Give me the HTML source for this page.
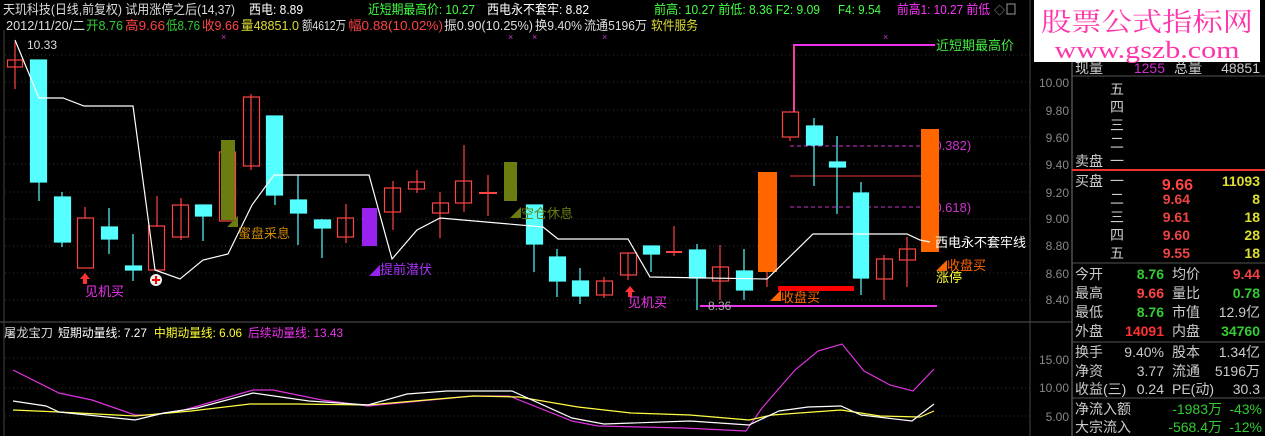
<!DOCTYPE html>
<html><head><meta charset="utf-8"><style>
html,body{margin:0;padding:0;background:#000;width:1265px;height:436px;overflow:hidden}
svg{display:block}
text{font-family:"Liberation Sans","WenQuanYi Zen Hei","Noto Sans CJK SC",sans-serif}
</style></head><body>
<svg width="1265" height="436" viewBox="0 0 1265 436" xmlns="http://www.w3.org/2000/svg">
<rect width="1265" height="436" fill="#000"/>
<!-- grid -->
<g stroke="#333" stroke-dasharray="1,3" stroke-width="1">
<line x1="5" y1="55" x2="1030" y2="55"/><line x1="5" y1="82" x2="1030" y2="82"/><line x1="5" y1="110" x2="1030" y2="110"/>
<line x1="5" y1="137" x2="1030" y2="137"/><line x1="5" y1="164" x2="1030" y2="164"/><line x1="5" y1="192" x2="1030" y2="192"/>
<line x1="5" y1="219" x2="1030" y2="219"/><line x1="5" y1="246" x2="1030" y2="246"/><line x1="5" y1="273" x2="1030" y2="273"/>
<line x1="5" y1="300" x2="1030" y2="300"/>
<line x1="5" y1="358" x2="1030" y2="358"/><line x1="5" y1="388" x2="1030" y2="388"/><line x1="5" y1="416" x2="1030" y2="416"/>
</g>
<line x1="0" y1="322" x2="1072" y2="322" stroke="#555"/>
<line x1="1030" y1="0" x2="1030" y2="436" stroke="#444"/>
<line x1="1072" y1="62" x2="1072" y2="436" stroke="#777"/>
<line x1="4" y1="30" x2="4" y2="436" stroke="#444"/>

<!-- header -->
<g font-size="13">
<text x="3" y="14" fill="#ddd" textLength="232" lengthAdjust="spacingAndGlyphs">天玑科技(日线,前复权) 试用涨停之后(14,37)</text>
<text x="249" y="14" fill="#fff" textLength="54" lengthAdjust="spacingAndGlyphs">西电: 8.89</text>
<text x="368" y="14" fill="#4f4" textLength="107" lengthAdjust="spacingAndGlyphs">近短期最高价: 10.27</text>
<text x="487" y="14" fill="#fff" textLength="102" lengthAdjust="spacingAndGlyphs">西电永不套牢: 8.82</text>
<text x="654" y="14" fill="#4f4" textLength="166" lengthAdjust="spacingAndGlyphs">前高: 10.27  前低: 8.36  F2: 9.09</text>
<text x="838" y="14" fill="#4f4" textLength="43" lengthAdjust="spacingAndGlyphs">F4: 9.54</text>
<text x="897" y="14" fill="#f3f" textLength="93" lengthAdjust="spacingAndGlyphs">前高1: 10.27  前低</text>
<text x="994" y="14" fill="#999" font-size="11">◇</text>
<rect x="1007" y="4" width="8" height="10" fill="none" stroke="#999"/>
<text x="6" y="30" fill="#ddd" textLength="79" lengthAdjust="spacingAndGlyphs">2012/11/20/二</text>
<text x="86" y="30" fill="#3c3" textLength="37" lengthAdjust="spacingAndGlyphs">开8.76</text>
<text x="125" y="30" fill="#f44" textLength="40" lengthAdjust="spacingAndGlyphs">高9.66</text>
<text x="166" y="30" fill="#3c3" textLength="34" lengthAdjust="spacingAndGlyphs">低8.76</text>
<text x="202" y="30" fill="#f44" textLength="37" lengthAdjust="spacingAndGlyphs">收9.66</text>
<text x="241" y="30" fill="#dd3" textLength="58" lengthAdjust="spacingAndGlyphs">量48851.0</text>
<text x="302" y="30" fill="#ddd" textLength="44" lengthAdjust="spacingAndGlyphs">额4612万</text>
<text x="348" y="30" fill="#f44" textLength="95" lengthAdjust="spacingAndGlyphs">幅0.88(10.02%)</text>
<text x="444" y="30" fill="#ddd" textLength="89" lengthAdjust="spacingAndGlyphs">振0.90(10.25%)</text>
<text x="535" y="30" fill="#ddd" textLength="47" lengthAdjust="spacingAndGlyphs">换9.40%</text>
<text x="584" y="30" fill="#ddd" textLength="63" lengthAdjust="spacingAndGlyphs">流通5196万</text>
<text x="651" y="30" fill="#dd3" textLength="47" lengthAdjust="spacingAndGlyphs">软件服务</text>
</g>
<!-- purple x marks -->
<g fill="#c3c" font-size="9"><text x="221" y="40">×</text><text x="508" y="40">×</text><text x="532" y="40">×</text><text x="602" y="40">×</text><text x="883" y="40">×</text></g>

<!-- logo -->
<rect x="1034" y="0" width="226" height="62" fill="#fff"/>
<text x="1147" y="31" fill="#ff33aa" font-size="26" text-anchor="middle" style="font-family:'Noto Serif CJK SC','Liberation Serif',serif" textLength="212" lengthAdjust="spacingAndGlyphs">股票公式指标网</text>
<text x="1147" y="58" fill="#ff33aa" font-size="24" text-anchor="middle" style="font-family:'Liberation Serif',serif" textLength="185" lengthAdjust="spacingAndGlyphs">www.gszb.com</text>

<!-- price axis -->
<g fill="#888" font-size="12" text-anchor="end">
<text x="1069" y="87">10.00</text><text x="1069" y="115">9.80</text><text x="1069" y="142">9.60</text><text x="1069" y="169">9.40</text>
<text x="1069" y="197">9.20</text><text x="1069" y="223">9.00</text><text x="1069" y="250">8.80</text><text x="1069" y="278">8.60</text>
<text x="1069" y="304">8.40</text>
<text x="1069" y="364">15.00</text><text x="1069" y="392">10.00</text><text x="1069" y="421">5.00</text>
</g>

<!-- right panel -->
<g font-size="14">
<text x="1075" y="73" fill="#ccc">现量</text><text x="1165" y="73" fill="#c3c" text-anchor="end">1255</text><text x="1174" y="73" fill="#ccc">总量</text><text x="1260" y="73" fill="#ccc" text-anchor="end">48851</text>
<line x1="1072" y1="76" x2="1265" y2="76" stroke="#555"/>
<text x="1110" y="94" fill="#ccc">五</text><text x="1110" y="112" fill="#ccc">四</text><text x="1110" y="130" fill="#ccc">三</text><text x="1110" y="148" fill="#ccc">二</text><text x="1110" y="166" fill="#ccc">一</text>
<text x="1075" y="166" fill="#ccc">卖盘</text>
<line x1="1072" y1="170" x2="1265" y2="170" stroke="#e33" stroke-width="2"/>
<text x="1075" y="186" fill="#ccc">买盘</text><text x="1110" y="186" fill="#ccc">一</text>
<text x="1193" y="190" fill="#f44" font-weight="bold" font-size="16" text-anchor="end">9.66</text><text x="1260" y="186" fill="#dd3" font-weight="bold" text-anchor="end">11093</text>
<text x="1110" y="204" fill="#ccc">二</text><text x="1190" y="204" fill="#e44" font-weight="bold" text-anchor="end">9.64</text><text x="1260" y="204" fill="#dd3" font-weight="bold" text-anchor="end">8</text>
<text x="1110" y="222" fill="#ccc">三</text><text x="1190" y="222" fill="#e44" font-weight="bold" text-anchor="end">9.61</text><text x="1260" y="222" fill="#dd3" font-weight="bold" text-anchor="end">18</text>
<text x="1110" y="240" fill="#ccc">四</text><text x="1190" y="240" fill="#e44" font-weight="bold" text-anchor="end">9.60</text><text x="1260" y="240" fill="#dd3" font-weight="bold" text-anchor="end">28</text>
<text x="1110" y="258" fill="#ccc">五</text><text x="1190" y="258" fill="#e44" font-weight="bold" text-anchor="end">9.55</text><text x="1260" y="258" fill="#dd3" font-weight="bold" text-anchor="end">18</text>
<line x1="1072" y1="263" x2="1265" y2="263" stroke="#555"/>
<text x="1075" y="279" fill="#ccc">今开</text><text x="1164" y="279" fill="#3c3" font-weight="bold" text-anchor="end">8.76</text><text x="1172" y="279" fill="#ccc">均价</text><text x="1260" y="279" fill="#e44" font-weight="bold" text-anchor="end">9.44</text>
<text x="1075" y="298" fill="#ccc">最高</text><text x="1164" y="298" fill="#f44" font-weight="bold" text-anchor="end">9.66</text><text x="1172" y="298" fill="#ccc">量比</text><text x="1260" y="298" fill="#3c3" font-weight="bold" text-anchor="end">0.78</text>
<text x="1075" y="317" fill="#ccc">最低</text><text x="1164" y="317" fill="#3c3" font-weight="bold" text-anchor="end">8.76</text><text x="1172" y="317" fill="#ccc">市值</text><text x="1260" y="317" fill="#ccc" text-anchor="end">12.9亿</text>
<text x="1075" y="336" fill="#ccc">外盘</text><text x="1164" y="336" fill="#f33" font-weight="bold" text-anchor="end">14091</text><text x="1172" y="336" fill="#ccc">内盘</text><text x="1260" y="336" fill="#3c3" font-weight="bold" text-anchor="end">34760</text>
<line x1="1072" y1="342" x2="1265" y2="342" stroke="#555"/>
<text x="1075" y="357" fill="#ccc">换手</text><text x="1164" y="357" fill="#ccc" text-anchor="end">9.40%</text><text x="1172" y="357" fill="#ccc">股本</text><text x="1260" y="357" fill="#ccc" text-anchor="end">1.34亿</text>
<text x="1075" y="376" fill="#ccc">净资</text><text x="1164" y="376" fill="#ccc" text-anchor="end">3.77</text><text x="1172" y="376" fill="#ccc">流通</text><text x="1260" y="376" fill="#ccc" text-anchor="end">5196万</text>
<text x="1075" y="394" fill="#ccc">收益(三)</text><text x="1164" y="394" fill="#ccc" text-anchor="end">0.24</text><text x="1172" y="394" fill="#ccc">PE(动)</text><text x="1260" y="394" fill="#ccc" text-anchor="end">30.3</text>
<line x1="1072" y1="398" x2="1265" y2="398" stroke="#555"/>
<text x="1075" y="414" fill="#ccc">净流入额</text><text x="1222" y="414" fill="#3c3" text-anchor="end">-1983万</text><text x="1262" y="414" fill="#3c3" text-anchor="end">-43%</text>
<text x="1075" y="432" fill="#ccc">大宗流入</text><text x="1222" y="432" fill="#3c3" text-anchor="end">-568.4万</text><text x="1262" y="432" fill="#3c3" text-anchor="end">-12%</text>
</g>

<!-- special lines -->
<polyline points="794,112 794,45 935,45" fill="none" stroke="#e3e" stroke-width="2"/>
<line x1="794" y1="45" x2="794" y2="112" stroke="#f44"/>
<text x="936" y="50" fill="#4e4" font-size="13">近短期最高价</text>
<line x1="790" y1="146" x2="925" y2="146" stroke="#c3c" stroke-dasharray="4,3"/>
<line x1="790" y1="207" x2="925" y2="207" stroke="#c3c" stroke-dasharray="4,3"/>
<text x="930" y="150" fill="#c3c" font-size="13">(0.382)</text>
<text x="930" y="212" fill="#c3c" font-size="13">(0.618)</text>
<line x1="790" y1="176" x2="930" y2="176" stroke="#e33"/>
<rect x="778" y="286" width="76" height="5" fill="#f00"/>
<line x1="700" y1="306" x2="937" y2="306" stroke="#e3e" stroke-width="2"/>
<text x="708" y="310" fill="#aaa" font-size="12">8.36</text>

<!-- candles -->
<g stroke-width="1.2">
<g stroke="#f44" fill="none">
<line x1="15" y1="42" x2="15" y2="89"/><rect x="7.5" y="60" width="15" height="7"/>
<line x1="85" y1="207" x2="85" y2="218"/><rect x="77.5" y="218" width="16" height="50"/>
<line x1="157" y1="196" x2="157" y2="226"/><rect x="148.5" y="226" width="16" height="44"/>
<line x1="181" y1="198" x2="181" y2="240"/><rect x="172.5" y="205" width="16" height="32"/>
<rect x="219.5" y="152" width="16" height="69"/>
<line x1="251" y1="94" x2="251" y2="170"/><rect x="243.5" y="97" width="16" height="69"/>
<line x1="346" y1="204" x2="346" y2="243"/><rect x="337.5" y="218" width="16" height="19"/>
<line x1="393" y1="181" x2="393" y2="230"/><rect x="384.5" y="188" width="16" height="24"/>
<line x1="417" y1="170" x2="417" y2="193"/><rect x="408.5" y="182" width="16" height="7"/>
<line x1="440" y1="192" x2="440" y2="238"/><rect x="432.5" y="203" width="16" height="10"/>
<line x1="464" y1="145" x2="464" y2="212"/><rect x="455.5" y="181" width="16" height="22"/>
<line x1="488" y1="175" x2="488" y2="216"/><line x1="479" y1="193" x2="497" y2="193" stroke-width="2"/>
<line x1="604" y1="277" x2="604" y2="298"/><rect x="596.5" y="281" width="16" height="14"/>
<line x1="628" y1="253" x2="628" y2="280"/><rect x="620.5" y="253" width="16" height="22"/>
<line x1="674" y1="226" x2="674" y2="256"/><line x1="666" y1="252" x2="682" y2="252" stroke-width="2"/>
<line x1="720" y1="245" x2="720" y2="300"/><rect x="712.5" y="267" width="16" height="14"/>
<line x1="767" y1="272" x2="767" y2="287"/>
<line x1="790" y1="137" x2="790" y2="141"/><rect x="782.5" y="112" width="16" height="25"/>
<line x1="884" y1="255" x2="884" y2="300"/><rect x="876.5" y="259" width="16" height="20"/>
<line x1="907" y1="237" x2="907" y2="287"/><rect x="899.5" y="249" width="16" height="11"/>
</g>
<g fill="#55ffff" stroke="#55ffff">
<line x1="39" y1="182" x2="39" y2="201"/><rect x="30.5" y="60" width="16" height="122"/>
<line x1="62" y1="192" x2="62" y2="247"/><rect x="54.5" y="197" width="16" height="45"/>
<line x1="109" y1="208" x2="109" y2="254"/><rect x="101.5" y="227" width="16" height="12"/>
<line x1="133" y1="234" x2="133" y2="281"/><rect x="125.5" y="266" width="16" height="4"/>
<line x1="203" y1="216" x2="203" y2="241"/><rect x="195.5" y="205" width="16" height="11"/>
<line x1="275" y1="195" x2="275" y2="205"/><rect x="266.5" y="116" width="16" height="79"/>
<line x1="298" y1="175" x2="298" y2="245"/><rect x="290.5" y="200" width="16" height="13"/>
<line x1="322" y1="219" x2="322" y2="258"/><rect x="314.5" y="220" width="16" height="8"/>
<line x1="534" y1="244" x2="534" y2="272"/><rect x="526.5" y="205" width="16" height="39"/>
<line x1="557" y1="249" x2="557" y2="297"/><rect x="549.5" y="257" width="16" height="24"/>
<line x1="580" y1="268" x2="580" y2="304"/><rect x="572.5" y="281" width="16" height="15"/>
<line x1="651" y1="254" x2="651" y2="272"/><rect x="643.5" y="246" width="16" height="8"/>
<line x1="697" y1="244" x2="697" y2="310"/><rect x="689.5" y="250" width="16" height="28"/>
<line x1="744" y1="249" x2="744" y2="300"/><rect x="736.5" y="271" width="16" height="19"/>
<line x1="814" y1="118" x2="814" y2="186"/><rect x="806.5" y="126" width="16" height="19"/>
<line x1="837" y1="136" x2="837" y2="214"/><rect x="829.5" y="162" width="16" height="5"/>
<line x1="861" y1="182" x2="861" y2="295"/><rect x="853.5" y="193" width="15" height="85"/>
</g>
<rect x="221" y="140" width="14" height="80" fill="#6b7d10"/>
<rect x="504" y="162" width="13" height="39" fill="#6b7d10"/>
<rect x="362" y="208" width="15" height="38" fill="#9922ee"/>
<rect x="758" y="172" width="19" height="100" fill="#ff6600"/>
<rect x="921" y="129" width="18" height="123" fill="#ff6600"/>
</g>

<!-- white line -->
<polyline fill="none" stroke="#fff" stroke-width="1.2" points="15,40 39,98 63,98 84,106 133,106 155,270 180,279 203,260 228,254 252,205 274,175 369,175 392,259 417,230 440,218 543,227 558,239 628,239 650,277 767,279 813,234 907,234 920,240 930,242"/>
<text x="27" y="49" fill="#ddd" font-size="12">10.33</text>
<text x="935" y="247" fill="#fff" font-size="13">西电永不套牢线</text>

<!-- signal labels -->
<g font-size="13">
<path d="M80,279 l5,-6 l5,6 h-3 v5 h-4 v-5z" fill="#f33"/>
<text x="85" y="296" fill="#e3e">见机买</text>
<circle cx="156" cy="280" r="6" fill="#eee"/><path d="M156,276 v8 M152,280 h8" stroke="#e00" stroke-width="2"/>
<path d="M227,227 l11,-11 v11z" fill="#6b7d10"/><text x="238" y="238" fill="#c80">蜜盘采息</text>
<path d="M369,276 l11,-11 v11z" fill="#9922ee"/><text x="380" y="274" fill="#a3f">提前潜伏</text>
<path d="M510,218 l11,-11 v11z" fill="#6b7d10"/><text x="521" y="218" fill="#6b7d10">空仓休息</text>
<path d="M625,292 l5,-6 l5,6 h-3 v5 h-4 v-5z" fill="#f33"/>
<text x="628" y="307" fill="#e3e">见机买</text>
<path d="M770,301 l11,-11 v11z" fill="#f60"/><text x="781" y="302" fill="#f60">收盘买</text>
<path d="M936,271 l11,-11 v11z" fill="#f60"/><text x="947" y="270" fill="#f60">收盘买</text>
<text x="936" y="282" fill="#ff3">涨停</text>
</g>

<!-- lower indicator -->
<g font-size="12">
<text x="4" y="337" fill="#ddd" textLength="49" lengthAdjust="spacingAndGlyphs">屠龙宝刀</text>
<text x="58" y="337" fill="#fff" textLength="89" lengthAdjust="spacingAndGlyphs">短期动量线: 7.27</text>
<text x="154" y="337" fill="#ff3" textLength="88" lengthAdjust="spacingAndGlyphs">中期动量线: 6.06</text>
<text x="248" y="337" fill="#e3e" textLength="95" lengthAdjust="spacingAndGlyphs">后续动量线: 13.43</text>
</g>
<polyline fill="none" stroke="#d3d" stroke-width="1.2" points="13,370 59,393 92,400 135,415 151,415 184,410 253,390 273,390 322,400 368,406 473,396 509,396 572,421 598,426 683,428 746,431 762,408 795,370 818,351 842,344 864,371 890,385 913,391 934,369"/>
<polyline fill="none" stroke="#ffff44" stroke-width="1.2" points="13,410 59,412 135,416 191,411 250,404 296,404 368,405 473,396 519,397 578,407 631,413 690,415 749,420 772,415 841,410 880,416 920,417 934,411"/>
<polyline fill="none" stroke="#fff" stroke-width="1.2" points="13,401 46,406 59,412 135,420 164,413 197,408 253,393 309,401 368,405 407,394 447,391 512,391 572,418 604,424 690,421 749,425 779,411 808,407 841,406 861,415 912,421 934,404"/>
</svg>
</body></html>
